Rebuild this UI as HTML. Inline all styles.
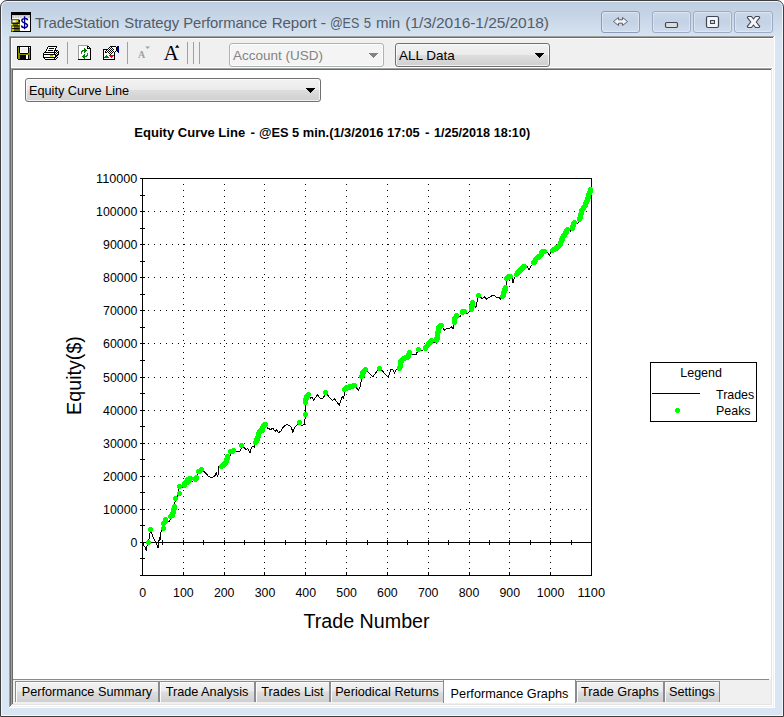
<!DOCTYPE html>
<html><head><meta charset="utf-8"><title>TradeStation Strategy Performance Report</title>
<style>
html,body{margin:0;padding:0;background:#fff;}
body{width:784px;height:717px;position:relative;overflow:hidden;font-family:"Liberation Sans",sans-serif;}
.abs{position:absolute;}
#win{position:absolute;left:0;top:0;width:782px;height:715px;border:1px solid #3e3e3e;border-radius:7px 7px 0 0;
 background:linear-gradient(to bottom,#bccde0 0px,#c6d5e6 14px,#d6e3f1 36px,#d9e5f2 40px,#d9e5f2 100%);
 box-shadow:inset 0 0 0 1px #f2f6fb;}
#title{left:35.5px;top:13px;font-size:15px;letter-spacing:-0.07px;color:#535c69;white-space:nowrap;line-height:20px;}
.cb{position:absolute;top:11px;height:20px;border:1px solid #8d9bb8;border-radius:3px;box-shadow:inset 0 0 0 1px rgba(255,255,255,.35);
 background:linear-gradient(to bottom,#c9d7e8,#c3d2e5 50%,#cfdcec);}
#client{left:9px;top:36px;width:766px;height:672px;background:#f0f0f0;}
.tab{position:absolute;top:681px;height:21px;border:1px solid #898c95;border-bottom:none;box-sizing:border-box;box-shadow:inset 1px 1px 0 #fbfbfb;
 background:linear-gradient(to bottom,#f2f2f2 0,#ebebeb 45%,#dddddd 50%,#cfcfcf 100%);font-size:12.7px;line-height:20px;color:#000;white-space:nowrap;text-align:center;}
.sep{position:absolute;top:42px;width:1px;height:22px;background:#a0a0a0;}
.dd{position:absolute;box-sizing:border-box;border:1px solid #707070;border-radius:3px;box-shadow:inset 0 0 0 1px rgba(255,255,255,.7);background:linear-gradient(to bottom,#f2f2f2 0,#ebebeb 48%,#dddddd 52%,#cfcfcf 100%);font-size:13.3px;white-space:nowrap;}
.arr{position:absolute;width:0;height:0;border-left:4px solid transparent;border-right:4px solid transparent;border-top:4px solid #000;}
</style></head><body>
<div id="win"></div>
<!-- title icon -->
<svg class="abs" style="left:11px;top:12px" width="20" height="20" viewBox="0 0 20 20">
<g style="filter:blur(0.35px)">
<rect x="0" y="0" width="20" height="20" fill="#000"/><rect x="1" y="3" width="18" height="16" fill="#fff"/><rect x="1" y="3" width="18" height="3.200" fill="#c6c6c6"/>
<rect x="3" y="4" width="1.300" height="2" fill="#e8e8e8"/><rect x="5.500" y="4" width="1.300" height="2" fill="#e8e8e8"/><rect x="8" y="4" width="1.300" height="2" fill="#e8e8e8"/><rect x="10.500" y="4" width="1.300" height="2" fill="#e8e8e8"/><rect x="13" y="4" width="1.300" height="2" fill="#e8e8e8"/><rect x="15.500" y="4" width="1.300" height="2" fill="#e8e8e8"/>
<rect x="0" y="7" width="9" height="13" rx="1.500" fill="#6c6c00"/>
<rect x="1.500" y="8.300" width="4" height="2.200" fill="#fff"/><rect x="4.500" y="8.300" width="3" height="1.700" fill="#d8d800"/>
<rect x="1" y="10.800" width="7.500" height="1" fill="#000"/><rect x="1.500" y="13.400" width="7" height="1" fill="#000"/><rect x="1.500" y="16.100" width="7" height="1" fill="#000"/><rect x="2" y="19" width="7" height="1" fill="#000"/>
<rect x="7.500" y="8" width="1.500" height="2.500" fill="#000"/>
<rect x="0" y="11.800" width="1.800" height="1.600" fill="#f0f000"/><rect x="0.800" y="14.500" width="2.200" height="1.500" fill="#e0e000"/><rect x="0.800" y="17.200" width="2.200" height="1.600" fill="#e0e000"/><rect x="7" y="12" width="1.500" height="1.200" fill="#e0e000"/>
<path d="M13.600,4.300 L13.600,17.300" stroke="#000090" stroke-width="1.200" fill="none"/>
<path d="M16.500,8.300 C16.300,6 10.700,6 10.800,8.700 C10.900,11.300 16.500,10.600 16.500,13.600 C16.500,16.300 10.600,16.300 10.600,13.500" stroke="#000090" stroke-width="1.500" fill="none"/>
</g></svg>
<svg id="title" class="abs" style="left:0;top:0" width="600" height="36" font-family="Liberation Sans, sans-serif" font-size="15px" fill="#535c69"><text x="35.0" y="28" textLength="84.4" lengthAdjust="spacingAndGlyphs">TradeStation</text><text x="124.3" y="28" textLength="54.8" lengthAdjust="spacingAndGlyphs">Strategy</text><text x="183.2" y="28" textLength="84.1" lengthAdjust="spacingAndGlyphs">Performance</text><text x="271.7" y="28" textLength="44.9" lengthAdjust="spacingAndGlyphs">Report</text><text x="320.4" y="28" textLength="5.6" lengthAdjust="spacingAndGlyphs">-</text><text x="329.9" y="28" textLength="29.3" lengthAdjust="spacingAndGlyphs">@ES</text><text x="363.8" y="28" textLength="7.3" lengthAdjust="spacingAndGlyphs">5</text><text x="376.0" y="28" textLength="24.1" lengthAdjust="spacingAndGlyphs">min</text><text x="405.3" y="28" textLength="143.6" lengthAdjust="spacingAndGlyphs">(1/3/2016-1/25/2018)</text></svg>
<div class="cb" style="left:601px;width:37px"></div>
<div class="cb" style="left:652px;width:37px;border-color:#9eabc5"></div>
<div class="cb" style="left:693px;width:37px;border-color:#9eabc5"></div>
<div class="cb" style="left:734px;width:37px;border-color:#9eabc5"></div>
<svg class="abs" style="left:601px;top:11px" width="172" height="22" viewBox="0 0 172 22">
<path d="M12.500,10.500 L17.500,6.500 L17.500,8.800 L21.500,8.800 L21.500,6.500 L26.500,10.500 L21.500,14.500 L21.500,12.200 L17.500,12.200 L17.500,14.500 Z" fill="#f4f4f4" stroke="#5a6270" stroke-width="1"/>
<rect x="64.500" y="11.500" width="12" height="5" rx="1.200" fill="#dcdcdc" stroke="#3f4656" stroke-width="1.200"/>
<rect x="105.500" y="5.500" width="12" height="11" rx="1.500" fill="#f4f4f4" stroke="#3f4656" stroke-width="1.200"/><rect x="109.500" y="9.500" width="4" height="3" fill="#c5d3e6" stroke="#3f4656" stroke-width="1"/>
<path d="M147,5.500 L150.500,5.500 L152.500,8 L154.500,5.500 L158,5.500 L158.700,6.600 L155.200,11 L158.700,15.400 L158,16.500 L154.500,16.500 L152.500,14 L150.500,16.500 L147,16.500 L146.300,15.400 L149.800,11 L146.300,6.600 Z" fill="#f6f6f6" stroke="#3f4656" stroke-width="1.100" stroke-linejoin="round"/>
</svg>
<!-- client -->
<div class="abs" style="left:9px;top:36px;width:766px;height:672px;background:#fff"></div>
<div class="abs" style="left:9px;top:36px;width:765px;height:671px;background:#a0a0a0"></div>
<div class="abs" style="left:10px;top:37px;width:764px;height:670px;background:#f0f0f0"></div>
<div class="abs" style="left:10px;top:37px;width:763px;height:669px;background:#696969"></div>
<div class="abs" style="left:11px;top:38px;width:762px;height:668px;background:#fff"></div>
<div class="abs" style="left:12px;top:39px;width:761px;height:667px;background:#f0f0f0"></div>
<!-- inner view -->
<div class="abs" style="left:11px;top:67px;width:762px;height:1px;background:#fff"></div>
<div class="abs" style="left:11px;top:68px;width:762px;height:638px;background:#fff"></div>
<div class="abs" style="left:11px;top:68px;width:761px;height:637px;background:#a0a0a0"></div>
<div class="abs" style="left:12px;top:69px;width:760px;height:636px;background:#e3e3e3"></div>
<div class="abs" style="left:12px;top:69px;width:759px;height:635px;background:#696969"></div>
<div class="abs" style="left:13px;top:70px;width:758px;height:634px;background:#f0f0f0"></div>
<div class="abs" style="left:13px;top:70px;width:758px;height:609px;background:#fff"></div>
<div class="abs" style="left:13px;top:679px;width:756px;height:1px;background:#85888f"></div>
<!-- toolbar icons -->
<svg class="abs" style="left:11px;top:38px" width="200" height="30" viewBox="11 38 200 30" shape-rendering="crispEdges">
<rect x="17" y="46" width="14" height="1" fill="#000"/><rect x="17" y="47" width="1" height="1" fill="#000"/><rect x="18" y="47" width="1" height="1" fill="#8a8a00"/><rect x="19" y="47" width="1" height="1" fill="#000"/><rect x="20" y="47" width="8" height="1" fill="#fff"/><rect x="28" y="47" width="1" height="1" fill="#000"/><rect x="29" y="47" width="1" height="1" fill="#fff"/><rect x="30" y="47" width="1" height="1" fill="#000"/><rect x="17" y="48" width="1" height="1" fill="#000"/><rect x="18" y="48" width="1" height="1" fill="#8a8a00"/><rect x="19" y="48" width="1" height="1" fill="#000"/><rect x="20" y="48" width="1" height="1" fill="#fff"/><rect x="21" y="48" width="6" height="1" fill="#efefef"/><rect x="27" y="48" width="1" height="1" fill="#fff"/><rect x="28" y="48" width="1" height="1" fill="#000"/><rect x="29" y="48" width="1" height="1" fill="#8a8a00"/><rect x="30" y="48" width="1" height="1" fill="#000"/><rect x="17" y="49" width="1" height="1" fill="#000"/><rect x="18" y="49" width="1" height="1" fill="#8a8a00"/><rect x="19" y="49" width="1" height="1" fill="#000"/><rect x="20" y="49" width="1" height="1" fill="#fff"/><rect x="21" y="49" width="6" height="1" fill="#efefef"/><rect x="27" y="49" width="1" height="1" fill="#fff"/><rect x="28" y="49" width="1" height="1" fill="#000"/><rect x="29" y="49" width="1" height="1" fill="#8a8a00"/><rect x="30" y="49" width="1" height="1" fill="#000"/><rect x="17" y="50" width="1" height="1" fill="#000"/><rect x="18" y="50" width="1" height="1" fill="#8a8a00"/><rect x="19" y="50" width="1" height="1" fill="#000"/><rect x="20" y="50" width="1" height="1" fill="#fff"/><rect x="21" y="50" width="6" height="1" fill="#efefef"/><rect x="27" y="50" width="1" height="1" fill="#fff"/><rect x="28" y="50" width="1" height="1" fill="#000"/><rect x="29" y="50" width="1" height="1" fill="#8a8a00"/><rect x="30" y="50" width="1" height="1" fill="#000"/><rect x="17" y="51" width="1" height="1" fill="#000"/><rect x="18" y="51" width="1" height="1" fill="#8a8a00"/><rect x="19" y="51" width="1" height="1" fill="#000"/><rect x="20" y="51" width="1" height="1" fill="#fff"/><rect x="21" y="51" width="6" height="1" fill="#efefef"/><rect x="27" y="51" width="1" height="1" fill="#fff"/><rect x="28" y="51" width="1" height="1" fill="#000"/><rect x="29" y="51" width="1" height="1" fill="#8a8a00"/><rect x="30" y="51" width="1" height="1" fill="#000"/><rect x="17" y="52" width="1" height="1" fill="#000"/><rect x="18" y="52" width="1" height="1" fill="#8a8a00"/><rect x="19" y="52" width="1" height="1" fill="#000"/><rect x="20" y="52" width="8" height="1" fill="#fff"/><rect x="28" y="52" width="1" height="1" fill="#000"/><rect x="29" y="52" width="1" height="1" fill="#8a8a00"/><rect x="30" y="52" width="1" height="1" fill="#000"/><rect x="17" y="53" width="1" height="1" fill="#000"/><rect x="18" y="53" width="2" height="1" fill="#8a8a00"/><rect x="20" y="53" width="8" height="1" fill="#000"/><rect x="28" y="53" width="2" height="1" fill="#8a8a00"/><rect x="30" y="53" width="1" height="1" fill="#000"/><rect x="17" y="54" width="1" height="1" fill="#000"/><rect x="18" y="54" width="12" height="1" fill="#8a8a00"/><rect x="30" y="54" width="1" height="1" fill="#000"/><rect x="17" y="55" width="1" height="1" fill="#000"/><rect x="18" y="55" width="2" height="1" fill="#8a8a00"/><rect x="20" y="55" width="6" height="1" fill="#000"/><rect x="26" y="55" width="2" height="1" fill="#fff"/><rect x="28" y="55" width="1" height="1" fill="#000"/><rect x="29" y="55" width="1" height="1" fill="#8a8a00"/><rect x="30" y="55" width="1" height="1" fill="#000"/><rect x="17" y="56" width="1" height="1" fill="#000"/><rect x="18" y="56" width="2" height="1" fill="#8a8a00"/><rect x="20" y="56" width="6" height="1" fill="#000"/><rect x="26" y="56" width="2" height="1" fill="#fff"/><rect x="28" y="56" width="1" height="1" fill="#000"/><rect x="29" y="56" width="1" height="1" fill="#8a8a00"/><rect x="30" y="56" width="1" height="1" fill="#000"/><rect x="17" y="57" width="1" height="1" fill="#000"/><rect x="18" y="57" width="2" height="1" fill="#8a8a00"/><rect x="20" y="57" width="6" height="1" fill="#000"/><rect x="26" y="57" width="2" height="1" fill="#fff"/><rect x="28" y="57" width="1" height="1" fill="#000"/><rect x="29" y="57" width="1" height="1" fill="#8a8a00"/><rect x="30" y="57" width="1" height="1" fill="#000"/><rect x="17" y="58" width="1" height="1" fill="#000"/><rect x="18" y="58" width="2" height="1" fill="#8a8a00"/><rect x="20" y="58" width="6" height="1" fill="#000"/><rect x="26" y="58" width="2" height="1" fill="#fff"/><rect x="28" y="58" width="1" height="1" fill="#000"/><rect x="29" y="58" width="1" height="1" fill="#8a8a00"/><rect x="30" y="58" width="1" height="1" fill="#000"/><rect x="18" y="59" width="13" height="1" fill="#000"/><rect x="48" y="46" width="9" height="1" fill="#000"/><rect x="47" y="47" width="1" height="1" fill="#000"/><rect x="48" y="47" width="8" height="1" fill="#fff"/><rect x="56" y="47" width="1" height="1" fill="#000"/><rect x="47" y="48" width="1" height="1" fill="#000"/><rect x="48" y="48" width="1" height="1" fill="#fff"/><rect x="49" y="48" width="5" height="1" fill="#000"/><rect x="54" y="48" width="1" height="1" fill="#fff"/><rect x="55" y="48" width="1" height="1" fill="#000"/><rect x="46" y="49" width="1" height="1" fill="#000"/><rect x="47" y="49" width="8" height="1" fill="#fff"/><rect x="55" y="49" width="1" height="1" fill="#000"/><rect x="46" y="50" width="1" height="1" fill="#000"/><rect x="47" y="50" width="1" height="1" fill="#fff"/><rect x="48" y="50" width="5" height="1" fill="#000"/><rect x="53" y="50" width="1" height="1" fill="#fff"/><rect x="54" y="50" width="4" height="1" fill="#000"/><rect x="45" y="51" width="1" height="1" fill="#000"/><rect x="46" y="51" width="8" height="1" fill="#fff"/><rect x="54" y="51" width="1" height="1" fill="#000"/><rect x="55" y="51" width="1" height="1" fill="#fff"/><rect x="56" y="51" width="1" height="1" fill="#000"/><rect x="57" y="51" width="1" height="1" fill="#fff"/><rect x="58" y="51" width="1" height="1" fill="#000"/><rect x="44" y="52" width="12" height="1" fill="#000"/><rect x="56" y="52" width="1" height="1" fill="#fff"/><rect x="57" y="52" width="2" height="1" fill="#000"/><rect x="43" y="53" width="1" height="1" fill="#000"/><rect x="44" y="53" width="10" height="1" fill="#fff"/><rect x="54" y="53" width="1" height="1" fill="#000"/><rect x="55" y="53" width="1" height="1" fill="#fff"/><rect x="56" y="53" width="1" height="1" fill="#000"/><rect x="57" y="53" width="1" height="1" fill="#fff"/><rect x="58" y="53" width="1" height="1" fill="#000"/><rect x="43" y="54" width="13" height="1" fill="#000"/><rect x="56" y="54" width="1" height="1" fill="#fff"/><rect x="57" y="54" width="2" height="1" fill="#000"/><rect x="43" y="55" width="1" height="1" fill="#000"/><rect x="44" y="55" width="6" height="1" fill="#fff"/><rect x="50" y="55" width="3" height="1" fill="#8090a0"/><rect x="53" y="55" width="2" height="1" fill="#fff"/><rect x="55" y="55" width="3" height="1" fill="#000"/><rect x="43" y="56" width="1" height="1" fill="#000"/><rect x="44" y="56" width="6" height="1" fill="#fff"/><rect x="50" y="56" width="3" height="1" fill="#e8e800"/><rect x="53" y="56" width="2" height="1" fill="#fff"/><rect x="55" y="56" width="2" height="1" fill="#000"/><rect x="43" y="57" width="13" height="1" fill="#000"/><rect x="56" y="57" width="1" height="1" fill="#fff"/><rect x="57" y="57" width="1" height="1" fill="#000"/><rect x="44" y="58" width="1" height="1" fill="#000"/><rect x="45" y="58" width="9" height="1" fill="#fff"/><rect x="54" y="58" width="1" height="1" fill="#000"/><rect x="55" y="58" width="1" height="1" fill="#fff"/><rect x="56" y="58" width="1" height="1" fill="#000"/><rect x="45" y="59" width="11" height="1" fill="#000"/><rect x="78" y="45" width="10" height="1" fill="#a0a0a0"/><rect x="78" y="46" width="1" height="1" fill="#a0a0a0"/><rect x="79" y="46" width="8" height="1" fill="#fff"/><rect x="87" y="46" width="2" height="1" fill="#000"/><rect x="78" y="47" width="1" height="1" fill="#a0a0a0"/><rect x="79" y="47" width="8" height="1" fill="#fff"/><rect x="87" y="47" width="1" height="1" fill="#000"/><rect x="88" y="47" width="1" height="1" fill="#fff"/><rect x="89" y="47" width="1" height="1" fill="#000"/><rect x="78" y="48" width="1" height="1" fill="#a0a0a0"/><rect x="79" y="48" width="5" height="1" fill="#fff"/><rect x="84" y="48" width="1" height="1" fill="#008000"/><rect x="85" y="48" width="2" height="1" fill="#fff"/><rect x="87" y="48" width="4" height="1" fill="#000"/><rect x="78" y="49" width="1" height="1" fill="#a0a0a0"/><rect x="79" y="49" width="5" height="1" fill="#fff"/><rect x="84" y="49" width="2" height="1" fill="#008000"/><rect x="86" y="49" width="4" height="1" fill="#fff"/><rect x="90" y="49" width="1" height="1" fill="#000"/><rect x="78" y="50" width="1" height="1" fill="#a0a0a0"/><rect x="79" y="50" width="3" height="1" fill="#fff"/><rect x="82" y="50" width="5" height="1" fill="#008000"/><rect x="87" y="50" width="3" height="1" fill="#fff"/><rect x="90" y="50" width="1" height="1" fill="#000"/><rect x="78" y="51" width="1" height="1" fill="#a0a0a0"/><rect x="79" y="51" width="2" height="1" fill="#fff"/><rect x="81" y="51" width="2" height="1" fill="#008090"/><rect x="83" y="51" width="1" height="1" fill="#fff"/><rect x="84" y="51" width="2" height="1" fill="#008000"/><rect x="86" y="51" width="4" height="1" fill="#fff"/><rect x="90" y="51" width="1" height="1" fill="#000"/><rect x="78" y="52" width="1" height="1" fill="#a0a0a0"/><rect x="79" y="52" width="2" height="1" fill="#fff"/><rect x="81" y="52" width="1" height="1" fill="#008090"/><rect x="82" y="52" width="2" height="1" fill="#fff"/><rect x="84" y="52" width="1" height="1" fill="#008000"/><rect x="85" y="52" width="5" height="1" fill="#fff"/><rect x="90" y="52" width="1" height="1" fill="#000"/><rect x="78" y="53" width="1" height="1" fill="#a0a0a0"/><rect x="79" y="53" width="2" height="1" fill="#fff"/><rect x="81" y="53" width="1" height="1" fill="#008090"/><rect x="82" y="53" width="5" height="1" fill="#fff"/><rect x="87" y="53" width="1" height="1" fill="#008090"/><rect x="88" y="53" width="2" height="1" fill="#fff"/><rect x="90" y="53" width="1" height="1" fill="#000"/><rect x="78" y="54" width="1" height="1" fill="#a0a0a0"/><rect x="79" y="54" width="5" height="1" fill="#fff"/><rect x="84" y="54" width="1" height="1" fill="#008000"/><rect x="85" y="54" width="2" height="1" fill="#fff"/><rect x="87" y="54" width="1" height="1" fill="#008090"/><rect x="88" y="54" width="2" height="1" fill="#fff"/><rect x="90" y="54" width="1" height="1" fill="#000"/><rect x="78" y="55" width="1" height="1" fill="#a0a0a0"/><rect x="79" y="55" width="4" height="1" fill="#fff"/><rect x="83" y="55" width="2" height="1" fill="#008000"/><rect x="85" y="55" width="1" height="1" fill="#fff"/><rect x="86" y="55" width="2" height="1" fill="#008090"/><rect x="88" y="55" width="2" height="1" fill="#fff"/><rect x="90" y="55" width="1" height="1" fill="#000"/><rect x="78" y="56" width="1" height="1" fill="#a0a0a0"/><rect x="79" y="56" width="3" height="1" fill="#fff"/><rect x="82" y="56" width="5" height="1" fill="#008000"/><rect x="87" y="56" width="3" height="1" fill="#fff"/><rect x="90" y="56" width="1" height="1" fill="#000"/><rect x="78" y="57" width="1" height="1" fill="#a0a0a0"/><rect x="79" y="57" width="4" height="1" fill="#fff"/><rect x="83" y="57" width="2" height="1" fill="#008000"/><rect x="85" y="57" width="5" height="1" fill="#fff"/><rect x="90" y="57" width="1" height="1" fill="#000"/><rect x="78" y="58" width="1" height="1" fill="#a0a0a0"/><rect x="79" y="58" width="5" height="1" fill="#fff"/><rect x="84" y="58" width="1" height="1" fill="#008000"/><rect x="85" y="58" width="5" height="1" fill="#fff"/><rect x="90" y="58" width="1" height="1" fill="#000"/><rect x="78" y="59" width="13" height="1" fill="#000"/><rect x="110" y="46" width="6" height="1" fill="#000"/><rect x="117" y="46" width="2" height="1" fill="#000090"/><rect x="109" y="47" width="1" height="1" fill="#000"/><rect x="110" y="47" width="1" height="1" fill="#fff"/><rect x="111" y="47" width="1" height="1" fill="#000"/><rect x="112" y="47" width="4" height="1" fill="#fff"/><rect x="116" y="47" width="1" height="1" fill="#000"/><rect x="117" y="47" width="2" height="1" fill="#000090"/><rect x="108" y="48" width="1" height="1" fill="#000"/><rect x="109" y="48" width="1" height="1" fill="#fff"/><rect x="110" y="48" width="1" height="1" fill="#000"/><rect x="111" y="48" width="1" height="1" fill="#fff"/><rect x="112" y="48" width="1" height="1" fill="#000"/><rect x="113" y="48" width="3" height="1" fill="#fff"/><rect x="116" y="48" width="1" height="1" fill="#000"/><rect x="117" y="48" width="2" height="1" fill="#000090"/><rect x="103" y="49" width="5" height="1" fill="#000"/><rect x="108" y="49" width="1" height="1" fill="#fff"/><rect x="109" y="49" width="1" height="1" fill="#000"/><rect x="110" y="49" width="1" height="1" fill="#fff"/><rect x="111" y="49" width="1" height="1" fill="#000"/><rect x="112" y="49" width="1" height="1" fill="#fff"/><rect x="113" y="49" width="1" height="1" fill="#000"/><rect x="114" y="49" width="2" height="1" fill="#fff"/><rect x="116" y="49" width="1" height="1" fill="#000"/><rect x="117" y="49" width="2" height="1" fill="#000090"/><rect x="103" y="50" width="1" height="1" fill="#000"/><rect x="104" y="50" width="2" height="1" fill="#fff"/><rect x="106" y="50" width="1" height="1" fill="#000"/><rect x="107" y="50" width="1" height="1" fill="#fff"/><rect x="108" y="50" width="1" height="1" fill="#000"/><rect x="109" y="50" width="1" height="1" fill="#fff"/><rect x="110" y="50" width="1" height="1" fill="#000"/><rect x="111" y="50" width="1" height="1" fill="#fff"/><rect x="112" y="50" width="1" height="1" fill="#000"/><rect x="113" y="50" width="3" height="1" fill="#fff"/><rect x="116" y="50" width="1" height="1" fill="#000"/><rect x="117" y="50" width="2" height="1" fill="#000090"/><rect x="103" y="51" width="1" height="1" fill="#000"/><rect x="104" y="51" width="1" height="1" fill="#fff"/><rect x="105" y="51" width="1" height="1" fill="#000"/><rect x="106" y="51" width="1" height="1" fill="#fff"/><rect x="107" y="51" width="1" height="1" fill="#000"/><rect x="108" y="51" width="1" height="1" fill="#fff"/><rect x="109" y="51" width="1" height="1" fill="#000"/><rect x="110" y="51" width="1" height="1" fill="#fff"/><rect x="111" y="51" width="1" height="1" fill="#000"/><rect x="112" y="51" width="1" height="1" fill="#fff"/><rect x="113" y="51" width="1" height="1" fill="#000"/><rect x="114" y="51" width="1" height="1" fill="#fff"/><rect x="115" y="51" width="1" height="1" fill="#000"/><rect x="117" y="51" width="2" height="1" fill="#000090"/><rect x="103" y="52" width="1" height="1" fill="#000"/><rect x="104" y="52" width="1" height="1" fill="#fff"/><rect x="105" y="52" width="2" height="1" fill="#000"/><rect x="107" y="52" width="1" height="1" fill="#fff"/><rect x="108" y="52" width="1" height="1" fill="#000"/><rect x="109" y="52" width="1" height="1" fill="#fff"/><rect x="110" y="52" width="1" height="1" fill="#000"/><rect x="111" y="52" width="1" height="1" fill="#fff"/><rect x="112" y="52" width="1" height="1" fill="#000"/><rect x="113" y="52" width="1" height="1" fill="#fff"/><rect x="114" y="52" width="1" height="1" fill="#000"/><rect x="118" y="52" width="1" height="1" fill="#000090"/><rect x="103" y="53" width="1" height="1" fill="#000"/><rect x="104" y="53" width="5" height="1" fill="#fff"/><rect x="109" y="53" width="1" height="1" fill="#000"/><rect x="110" y="53" width="1" height="1" fill="#fff"/><rect x="111" y="53" width="1" height="1" fill="#000"/><rect x="112" y="53" width="2" height="1" fill="#fff"/><rect x="114" y="53" width="1" height="1" fill="#000"/><rect x="103" y="54" width="1" height="1" fill="#000"/><rect x="104" y="54" width="6" height="1" fill="#fff"/><rect x="110" y="54" width="1" height="1" fill="#000"/><rect x="111" y="54" width="3" height="1" fill="#fff"/><rect x="114" y="54" width="1" height="1" fill="#000"/><rect x="103" y="55" width="1" height="1" fill="#000"/><rect x="104" y="55" width="2" height="1" fill="#fff"/><rect x="106" y="55" width="1" height="1" fill="#008000"/><rect x="107" y="55" width="2" height="1" fill="#fff"/><rect x="109" y="55" width="5" height="1" fill="#ff0000"/><rect x="114" y="55" width="1" height="1" fill="#000"/><rect x="103" y="56" width="1" height="1" fill="#000"/><rect x="104" y="56" width="1" height="1" fill="#fff"/><rect x="105" y="56" width="3" height="1" fill="#008000"/><rect x="108" y="56" width="2" height="1" fill="#fff"/><rect x="110" y="56" width="3" height="1" fill="#ff0000"/><rect x="113" y="56" width="1" height="1" fill="#fff"/><rect x="114" y="56" width="1" height="1" fill="#000"/><rect x="103" y="57" width="1" height="1" fill="#000"/><rect x="104" y="57" width="5" height="1" fill="#008000"/><rect x="109" y="57" width="2" height="1" fill="#fff"/><rect x="111" y="57" width="1" height="1" fill="#ff0000"/><rect x="112" y="57" width="2" height="1" fill="#fff"/><rect x="114" y="57" width="1" height="1" fill="#000"/><rect x="103" y="58" width="1" height="1" fill="#000"/><rect x="104" y="58" width="10" height="1" fill="#fff"/><rect x="114" y="58" width="1" height="1" fill="#000"/><rect x="103" y="59" width="12" height="1" fill="#000"/><rect x="67" y="42" width="1" height="22" fill="#a0a0a0"/>
<rect x="127" y="42" width="1" height="22" fill="#a0a0a0"/>
<g shape-rendering="auto"><text x="141.700" y="58" font-family="Liberation Serif" font-size="10px" font-weight="bold" fill="#a0a0a0" text-anchor="middle">A</text><path d="M145.300,46.500 L150,46.500 L147.650,49 Z" fill="#a0a0a0"/>
<text x="171" y="59.500" font-family="Liberation Serif" font-size="21px" fill="#000" text-anchor="middle">A</text><path d="M175,47.700 L179.400,47.700 L177.200,44.700 Z" fill="#000"/></g>
<rect x="187" y="42" width="1" height="22" fill="#a0a0a0"/><rect x="193" y="42" width="1" height="22" fill="#a0a0a0"/><rect x="199" y="42" width="1" height="22" fill="#a0a0a0"/>
</svg>
<!-- dropdowns -->
<div class="dd" style="left:229px;top:43px;width:155px;height:24px;background:#f4f4f4;border-color:#adb2b5;color:#838383;font-size:13.5px;line-height:24px;padding-left:3px;">Account (USD)<svg style="position:absolute;left:139px;top:9px" width="9" height="5" shape-rendering="crispEdges" fill="#838383"><rect x="0" y="0" width="9" height="1"/><rect x="1" y="1" width="7" height="1"/><rect x="2" y="2" width="5" height="1"/><rect x="3" y="3" width="3" height="1"/><rect x="4" y="4" width="1" height="1"/></svg></div>
<div class="dd" style="left:395px;top:43px;width:155px;height:24px;font-size:13.5px;line-height:24px;padding-left:3px;">ALL Data<svg style="position:absolute;left:139px;top:9px" width="9" height="5" shape-rendering="crispEdges" fill="#000"><rect x="0" y="0" width="9" height="1"/><rect x="1" y="1" width="7" height="1"/><rect x="2" y="2" width="5" height="1"/><rect x="3" y="3" width="3" height="1"/><rect x="4" y="4" width="1" height="1"/></svg></div>
<div class="dd" style="left:25px;top:78px;width:296px;height:24px;font-size:12.7px;line-height:25px;padding-left:3px;">Equity Curve Line<svg style="position:absolute;left:280px;top:9px" width="9" height="5" shape-rendering="crispEdges" fill="#000"><rect x="0" y="0" width="9" height="1"/><rect x="1" y="1" width="7" height="1"/><rect x="2" y="2" width="5" height="1"/><rect x="3" y="3" width="3" height="1"/><rect x="4" y="4" width="1" height="1"/></svg></div>
<svg id="chart" width="784" height="717" viewBox="0 0 784 717" style="position:absolute;left:0;top:0" font-family="Liberation Sans, sans-serif">
<g shape-rendering="crispEdges" stroke="#000" stroke-width="1" stroke-dasharray="1 5" fill="none"><line x1="148" y1="211.5" x2="591" y2="211.5"/><line x1="148" y1="244.5" x2="591" y2="244.5"/><line x1="148" y1="277.5" x2="591" y2="277.5"/><line x1="148" y1="310.5" x2="591" y2="310.5"/><line x1="148" y1="343.5" x2="591" y2="343.5"/><line x1="148" y1="377.5" x2="591" y2="377.5"/><line x1="148" y1="410.5" x2="591" y2="410.5"/><line x1="148" y1="443.5" x2="591" y2="443.5"/><line x1="148" y1="476.5" x2="591" y2="476.5"/><line x1="148" y1="509.5" x2="591" y2="509.5"/><line x1="183.5" y1="184" x2="183.5" y2="575"/><line x1="224.5" y1="184" x2="224.5" y2="575"/><line x1="264.5" y1="184" x2="264.5" y2="575"/><line x1="305.5" y1="184" x2="305.5" y2="575"/><line x1="346.5" y1="184" x2="346.5" y2="575"/><line x1="387.5" y1="184" x2="387.5" y2="575"/><line x1="428.5" y1="184" x2="428.5" y2="575"/><line x1="469.5" y1="184" x2="469.5" y2="575"/><line x1="509.5" y1="184" x2="509.5" y2="575"/><line x1="550.5" y1="184" x2="550.5" y2="575"/></g>
<g shape-rendering="crispEdges" fill="#000">
<rect x="142" y="178" width="450" height="1"/>
<rect x="142" y="178" width="1" height="398"/>
<rect x="591" y="178" width="1" height="398"/>
<rect x="140" y="575" width="452" height="1"/>
<rect x="140" y="542" width="452" height="1"/>
<rect x="140" y="178" width="5" height="1"/><rect x="140" y="195" width="5" height="1"/><rect x="140" y="211" width="5" height="1"/><rect x="140" y="228" width="5" height="1"/><rect x="140" y="244" width="5" height="1"/><rect x="140" y="261" width="5" height="1"/><rect x="140" y="277" width="5" height="1"/><rect x="140" y="294" width="5" height="1"/><rect x="140" y="310" width="5" height="1"/><rect x="140" y="327" width="5" height="1"/><rect x="140" y="343" width="5" height="1"/><rect x="140" y="360" width="5" height="1"/><rect x="140" y="377" width="5" height="1"/><rect x="140" y="393" width="5" height="1"/><rect x="140" y="410" width="5" height="1"/><rect x="140" y="426" width="5" height="1"/><rect x="140" y="443" width="5" height="1"/><rect x="140" y="459" width="5" height="1"/><rect x="140" y="476" width="5" height="1"/><rect x="140" y="492" width="5" height="1"/><rect x="140" y="509" width="5" height="1"/><rect x="140" y="525" width="5" height="1"/><rect x="140" y="542" width="5" height="1"/><rect x="140" y="558" width="5" height="1"/><rect x="162" y="540" width="1" height="5"/><rect x="183" y="540" width="1" height="5"/><rect x="203" y="540" width="1" height="5"/><rect x="224" y="540" width="1" height="5"/><rect x="244" y="540" width="1" height="5"/><rect x="264" y="540" width="1" height="5"/><rect x="285" y="540" width="1" height="5"/><rect x="305" y="540" width="1" height="5"/><rect x="326" y="540" width="1" height="5"/><rect x="346" y="540" width="1" height="5"/><rect x="367" y="540" width="1" height="5"/><rect x="387" y="540" width="1" height="5"/><rect x="407" y="540" width="1" height="5"/><rect x="428" y="540" width="1" height="5"/><rect x="448" y="540" width="1" height="5"/><rect x="469" y="540" width="1" height="5"/><rect x="489" y="540" width="1" height="5"/><rect x="509" y="540" width="1" height="5"/><rect x="530" y="540" width="1" height="5"/><rect x="550" y="540" width="1" height="5"/><rect x="571" y="540" width="1" height="5"/><rect x="183" y="572" width="1" height="3"/><rect x="224" y="572" width="1" height="3"/><rect x="264" y="572" width="1" height="3"/><rect x="305" y="572" width="1" height="3"/><rect x="346" y="572" width="1" height="3"/><rect x="387" y="572" width="1" height="3"/><rect x="428" y="572" width="1" height="3"/><rect x="469" y="572" width="1" height="3"/><rect x="509" y="572" width="1" height="3"/><rect x="550" y="572" width="1" height="3"/>
</g>
<polyline points="142.9,542.4 144.1,546.4 145.2,547.0 146.1,550.5 147.2,545.1 148.4,542.5 149.5,535.9 150.6,529.3 153.3,537.5 156.4,543.6 158.3,548.2 159.2,537.5 159.9,540.5 161.0,532.1 163.3,528.6 163.8,523.7 165.9,519.8 167.9,522.1 169.5,521.4 171.0,516.7 172.5,514.4 173.6,510.6 174.5,506.8 175.4,498.8 179.1,493.7 178.2,488.4 179.4,486.5 182.5,487.6 184.0,485.3 185.9,482.5 187.1,483.0 187.9,479.2 190.2,478.8 189.1,481.0 192.5,481.5 194.0,479.9 195.4,479.2 196.9,477.6 198.6,471.5 201.7,469.6 205.5,473.0 208.6,476.4 211.7,477.6 214.7,476.1 216.3,473.0 217.8,477.3 218.9,466.1 221.6,466.1 223.9,465.3 226.2,461.5 227.8,456.9 230.1,455.8 230.8,451.5 233.9,450.8 236.2,451.8 239.6,451.4 241.5,448.3 241.2,446.0 243.8,447.5 246.1,449.8 247.6,448.3 249.9,452.9 251.5,447.5 253.0,446.0 254.5,447.5 255.6,442.9 256.8,439.8 258.4,436.8 259.1,431.4 262.2,430.3 263.7,425.3 265.6,424.5 267.6,428.3 270.6,429.4 272.9,428.3 275.2,431.4 276.8,429.9 278.3,432.9 280.6,431.4 282.9,427.6 285.2,425.3 287.5,424.5 289.8,426.0 291.4,427.6 292.9,432.2 294.4,427.6 296.7,425.3 299.3,422.2 301.3,425.3 304.4,424.8 305.5,414.5 305.5,402.7 306.2,397.6 308.2,394.6 310.5,398.4 312.1,396.9 313.6,399.9 315.9,396.9 317.4,394.6 319.7,397.6 322.0,399.2 324.3,396.1 325.4,392.4 328.4,396.0 332.3,400.6 334.6,399.0 339.2,405.2 342.2,396.7 343.8,398.3 344.6,389.1 347.6,387.5 350.7,386.7 354.5,385.7 358.4,389.8 360.7,386.0 361.4,376.8 363.0,372.9 365.3,369.4 369.1,372.9 372.9,376.8 375.2,373.7 377.5,370.6 379.4,368.6 382.9,371.4 385.2,374.5 388.3,377.1 390.6,369.9 392.9,369.9 394.4,372.9 396.7,369.1 399.8,368.3 400.6,363.7 401.3,360.2 405.2,357.6 408.2,356.8 409.3,352.5 412.8,354.5 415.9,355.0 418.2,349.9 422.0,350.7 425.1,348.4 428.2,344.6 431.2,340.7 434.3,343.0 436.6,340.7 437.4,335.3 438.2,331.5 438.9,327.7 439.6,326.7 441.5,325.2 444.6,330.5 446.9,328.2 449.2,329.0 451.5,326.7 453.0,329.0 454.1,322.9 454.5,318.3 456.5,316.0 460.7,316.0 462.2,312.1 464.5,311.4 467.6,313.7 469.1,312.1 471.4,309.1 472.2,305.2 472.6,302.9 476.0,307.5 477.5,299.1 478.3,295.5 480.6,296.8 482.1,299.1 484.4,296.8 486.7,299.1 489.1,297.5 491.4,296.0 494.4,295.2 496.7,297.5 499.0,297.5 500.6,299.1 502.9,296.0 504.1,291.4 505.9,287.6 506.7,284.5 506.7,278.4 510.5,276.1 512.1,278.4 513.1,283.0 514.4,277.6 516.7,274.5 520.5,269.9 524.3,266.4 527.4,266.9 528.9,269.9 530.5,266.9 533.8,262.8 536.8,258.2 540.2,255.9 542.2,252.1 544.5,251.0 547.6,252.1 549.4,255.2 552.2,250.6 556.0,248.3 559.8,245.2 561.4,240.6 562.9,237.5 565.2,233.7 567.2,229.5 570.3,231.4 572.1,228.3 574.1,222.9 577.5,223.7 579.8,219.9 580.6,216.0 581.3,213.0 582.1,209.9 583.6,207.6 585.2,205.3 586.2,202.5 587.5,199.9 588.2,197.3 589.0,194.6 589.8,192.2 590.5,189.9" fill="none" stroke="#000" stroke-width="1" shape-rendering="crispEdges"/>
<g fill="#00ff00" shape-rendering="crispEdges"><circle cx="148.5" cy="542.5" r="2.5"/><circle cx="150.5" cy="529.5" r="2.5"/><circle cx="163.5" cy="528.5" r="2.5"/><circle cx="163.5" cy="523.5" r="2.5"/><circle cx="164.5" cy="522.5" r="2.5"/><circle cx="165.5" cy="521.5" r="2.5"/><circle cx="165.5" cy="520.5" r="2.5"/><circle cx="165.5" cy="519.5" r="2.5"/><circle cx="170.5" cy="516.5" r="2.5"/><circle cx="171.5" cy="515.5" r="2.5"/><circle cx="172.5" cy="515.5" r="2.5"/><circle cx="172.5" cy="514.5" r="2.5"/><circle cx="172.5" cy="513.5" r="2.5"/><circle cx="173.5" cy="512.5" r="2.5"/><circle cx="173.5" cy="511.5" r="2.5"/><circle cx="173.5" cy="510.5" r="2.5"/><circle cx="173.5" cy="509.5" r="2.5"/><circle cx="174.5" cy="508.5" r="2.5"/><circle cx="174.5" cy="507.5" r="2.5"/><circle cx="174.5" cy="506.5" r="2.5"/><circle cx="175.5" cy="498.5" r="2.5"/><circle cx="179.5" cy="493.5" r="2.5"/><circle cx="179.5" cy="486.5" r="2.5"/><circle cx="184.5" cy="485.5" r="2.5"/><circle cx="184.5" cy="484.5" r="2.5"/><circle cx="184.5" cy="483.5" r="2.5"/><circle cx="185.5" cy="483.5" r="2.5"/><circle cx="185.5" cy="482.5" r="2.5"/><circle cx="186.5" cy="482.5" r="2.5"/><circle cx="187.5" cy="482.5" r="2.5"/><circle cx="187.5" cy="481.5" r="2.5"/><circle cx="187.5" cy="480.5" r="2.5"/><circle cx="187.5" cy="479.5" r="2.5"/><circle cx="188.5" cy="479.5" r="2.5"/><circle cx="189.5" cy="478.5" r="2.5"/><circle cx="190.5" cy="478.5" r="2.5"/><circle cx="189.5" cy="479.5" r="2.5"/><circle cx="189.5" cy="480.5" r="2.5"/><circle cx="195.5" cy="479.5" r="2.5"/><circle cx="195.5" cy="478.5" r="2.5"/><circle cx="196.5" cy="478.5" r="2.5"/><circle cx="196.5" cy="477.5" r="2.5"/><circle cx="198.5" cy="471.5" r="2.5"/><circle cx="199.5" cy="471.5" r="2.5"/><circle cx="200.5" cy="470.5" r="2.5"/><circle cx="201.5" cy="469.5" r="2.5"/><circle cx="221.5" cy="466.5" r="2.5"/><circle cx="222.5" cy="465.5" r="2.5"/><circle cx="223.5" cy="465.5" r="2.5"/><circle cx="224.5" cy="464.5" r="2.5"/><circle cx="224.5" cy="463.5" r="2.5"/><circle cx="225.5" cy="463.5" r="2.5"/><circle cx="225.5" cy="462.5" r="2.5"/><circle cx="226.5" cy="461.5" r="2.5"/><circle cx="226.5" cy="460.5" r="2.5"/><circle cx="226.5" cy="459.5" r="2.5"/><circle cx="227.5" cy="458.5" r="2.5"/><circle cx="227.5" cy="457.5" r="2.5"/><circle cx="227.5" cy="456.5" r="2.5"/><circle cx="230.5" cy="451.5" r="2.5"/><circle cx="231.5" cy="451.5" r="2.5"/><circle cx="232.5" cy="451.5" r="2.5"/><circle cx="233.5" cy="450.5" r="2.5"/><circle cx="241.5" cy="445.5" r="2.5"/><circle cx="255.5" cy="442.5" r="2.5"/><circle cx="256.5" cy="441.5" r="2.5"/><circle cx="256.5" cy="440.5" r="2.5"/><circle cx="256.5" cy="439.5" r="2.5"/><circle cx="257.5" cy="439.5" r="2.5"/><circle cx="257.5" cy="438.5" r="2.5"/><circle cx="257.5" cy="437.5" r="2.5"/><circle cx="258.5" cy="436.5" r="2.5"/><circle cx="258.5" cy="435.5" r="2.5"/><circle cx="258.5" cy="434.5" r="2.5"/><circle cx="258.5" cy="433.5" r="2.5"/><circle cx="259.5" cy="432.5" r="2.5"/><circle cx="259.5" cy="431.5" r="2.5"/><circle cx="260.5" cy="430.5" r="2.5"/><circle cx="261.5" cy="430.5" r="2.5"/><circle cx="262.5" cy="430.5" r="2.5"/><circle cx="262.5" cy="429.5" r="2.5"/><circle cx="262.5" cy="428.5" r="2.5"/><circle cx="262.5" cy="427.5" r="2.5"/><circle cx="263.5" cy="426.5" r="2.5"/><circle cx="263.5" cy="425.5" r="2.5"/><circle cx="264.5" cy="424.5" r="2.5"/><circle cx="265.5" cy="424.5" r="2.5"/><circle cx="299.5" cy="422.5" r="2.5"/><circle cx="305.5" cy="414.5" r="2.5"/><circle cx="305.5" cy="402.5" r="2.5"/><circle cx="305.5" cy="401.5" r="2.5"/><circle cx="305.5" cy="400.5" r="2.5"/><circle cx="305.5" cy="399.5" r="2.5"/><circle cx="306.5" cy="398.5" r="2.5"/><circle cx="306.5" cy="397.5" r="2.5"/><circle cx="306.5" cy="396.5" r="2.5"/><circle cx="307.5" cy="396.5" r="2.5"/><circle cx="307.5" cy="395.5" r="2.5"/><circle cx="308.5" cy="394.5" r="2.5"/><circle cx="325.5" cy="392.5" r="2.5"/><circle cx="344.5" cy="389.5" r="2.5"/><circle cx="345.5" cy="388.5" r="2.5"/><circle cx="346.5" cy="388.5" r="2.5"/><circle cx="346.5" cy="387.5" r="2.5"/><circle cx="347.5" cy="387.5" r="2.5"/><circle cx="348.5" cy="387.5" r="2.5"/><circle cx="349.5" cy="387.5" r="2.5"/><circle cx="349.5" cy="386.5" r="2.5"/><circle cx="350.5" cy="386.5" r="2.5"/><circle cx="351.5" cy="386.5" r="2.5"/><circle cx="352.5" cy="386.5" r="2.5"/><circle cx="353.5" cy="385.5" r="2.5"/><circle cx="354.5" cy="385.5" r="2.5"/><circle cx="361.5" cy="376.5" r="2.5"/><circle cx="362.5" cy="375.5" r="2.5"/><circle cx="362.5" cy="374.5" r="2.5"/><circle cx="362.5" cy="373.5" r="2.5"/><circle cx="362.5" cy="372.5" r="2.5"/><circle cx="363.5" cy="372.5" r="2.5"/><circle cx="363.5" cy="371.5" r="2.5"/><circle cx="364.5" cy="370.5" r="2.5"/><circle cx="365.5" cy="369.5" r="2.5"/><circle cx="379.5" cy="368.5" r="2.5"/><circle cx="399.5" cy="368.5" r="2.5"/><circle cx="399.5" cy="367.5" r="2.5"/><circle cx="400.5" cy="366.5" r="2.5"/><circle cx="400.5" cy="365.5" r="2.5"/><circle cx="400.5" cy="364.5" r="2.5"/><circle cx="400.5" cy="363.5" r="2.5"/><circle cx="400.5" cy="362.5" r="2.5"/><circle cx="400.5" cy="361.5" r="2.5"/><circle cx="401.5" cy="361.5" r="2.5"/><circle cx="401.5" cy="360.5" r="2.5"/><circle cx="402.5" cy="359.5" r="2.5"/><circle cx="403.5" cy="358.5" r="2.5"/><circle cx="404.5" cy="358.5" r="2.5"/><circle cx="405.5" cy="357.5" r="2.5"/><circle cx="406.5" cy="357.5" r="2.5"/><circle cx="407.5" cy="357.5" r="2.5"/><circle cx="408.5" cy="356.5" r="2.5"/><circle cx="408.5" cy="355.5" r="2.5"/><circle cx="408.5" cy="354.5" r="2.5"/><circle cx="409.5" cy="353.5" r="2.5"/><circle cx="409.5" cy="352.5" r="2.5"/><circle cx="418.5" cy="349.5" r="2.5"/><circle cx="425.5" cy="348.5" r="2.5"/><circle cx="425.5" cy="347.5" r="2.5"/><circle cx="426.5" cy="346.5" r="2.5"/><circle cx="427.5" cy="345.5" r="2.5"/><circle cx="428.5" cy="344.5" r="2.5"/><circle cx="428.5" cy="343.5" r="2.5"/><circle cx="429.5" cy="343.5" r="2.5"/><circle cx="430.5" cy="342.5" r="2.5"/><circle cx="430.5" cy="341.5" r="2.5"/><circle cx="431.5" cy="340.5" r="2.5"/><circle cx="436.5" cy="340.5" r="2.5"/><circle cx="436.5" cy="339.5" r="2.5"/><circle cx="436.5" cy="338.5" r="2.5"/><circle cx="437.5" cy="338.5" r="2.5"/><circle cx="437.5" cy="337.5" r="2.5"/><circle cx="437.5" cy="336.5" r="2.5"/><circle cx="437.5" cy="335.5" r="2.5"/><circle cx="437.5" cy="334.5" r="2.5"/><circle cx="437.5" cy="333.5" r="2.5"/><circle cx="437.5" cy="332.5" r="2.5"/><circle cx="438.5" cy="331.5" r="2.5"/><circle cx="438.5" cy="330.5" r="2.5"/><circle cx="438.5" cy="329.5" r="2.5"/><circle cx="438.5" cy="328.5" r="2.5"/><circle cx="438.5" cy="327.5" r="2.5"/><circle cx="439.5" cy="327.5" r="2.5"/><circle cx="439.5" cy="326.5" r="2.5"/><circle cx="440.5" cy="326.5" r="2.5"/><circle cx="440.5" cy="325.5" r="2.5"/><circle cx="441.5" cy="325.5" r="2.5"/><circle cx="454.5" cy="322.5" r="2.5"/><circle cx="454.5" cy="321.5" r="2.5"/><circle cx="454.5" cy="320.5" r="2.5"/><circle cx="454.5" cy="319.5" r="2.5"/><circle cx="454.5" cy="318.5" r="2.5"/><circle cx="455.5" cy="317.5" r="2.5"/><circle cx="456.5" cy="316.5" r="2.5"/><circle cx="456.5" cy="315.5" r="2.5"/><circle cx="462.5" cy="312.5" r="2.5"/><circle cx="462.5" cy="311.5" r="2.5"/><circle cx="463.5" cy="311.5" r="2.5"/><circle cx="464.5" cy="311.5" r="2.5"/><circle cx="471.5" cy="309.5" r="2.5"/><circle cx="471.5" cy="308.5" r="2.5"/><circle cx="471.5" cy="307.5" r="2.5"/><circle cx="471.5" cy="306.5" r="2.5"/><circle cx="472.5" cy="305.5" r="2.5"/><circle cx="472.5" cy="304.5" r="2.5"/><circle cx="472.5" cy="303.5" r="2.5"/><circle cx="472.5" cy="302.5" r="2.5"/><circle cx="478.5" cy="295.5" r="2.5"/><circle cx="502.5" cy="296.5" r="2.5"/><circle cx="503.5" cy="295.5" r="2.5"/><circle cx="503.5" cy="294.5" r="2.5"/><circle cx="503.5" cy="293.5" r="2.5"/><circle cx="503.5" cy="292.5" r="2.5"/><circle cx="504.5" cy="291.5" r="2.5"/><circle cx="504.5" cy="290.5" r="2.5"/><circle cx="504.5" cy="289.5" r="2.5"/><circle cx="505.5" cy="289.5" r="2.5"/><circle cx="505.5" cy="288.5" r="2.5"/><circle cx="505.5" cy="287.5" r="2.5"/><circle cx="506.5" cy="278.5" r="2.5"/><circle cx="507.5" cy="277.5" r="2.5"/><circle cx="508.5" cy="277.5" r="2.5"/><circle cx="508.5" cy="276.5" r="2.5"/><circle cx="509.5" cy="276.5" r="2.5"/><circle cx="510.5" cy="276.5" r="2.5"/><circle cx="516.5" cy="274.5" r="2.5"/><circle cx="517.5" cy="273.5" r="2.5"/><circle cx="517.5" cy="272.5" r="2.5"/><circle cx="518.5" cy="272.5" r="2.5"/><circle cx="519.5" cy="271.5" r="2.5"/><circle cx="519.5" cy="270.5" r="2.5"/><circle cx="520.5" cy="269.5" r="2.5"/><circle cx="521.5" cy="269.5" r="2.5"/><circle cx="521.5" cy="268.5" r="2.5"/><circle cx="522.5" cy="268.5" r="2.5"/><circle cx="523.5" cy="267.5" r="2.5"/><circle cx="523.5" cy="266.5" r="2.5"/><circle cx="524.5" cy="266.5" r="2.5"/><circle cx="533.5" cy="262.5" r="2.5"/><circle cx="534.5" cy="262.5" r="2.5"/><circle cx="534.5" cy="261.5" r="2.5"/><circle cx="535.5" cy="260.5" r="2.5"/><circle cx="535.5" cy="259.5" r="2.5"/><circle cx="536.5" cy="258.5" r="2.5"/><circle cx="537.5" cy="257.5" r="2.5"/><circle cx="538.5" cy="257.5" r="2.5"/><circle cx="538.5" cy="256.5" r="2.5"/><circle cx="539.5" cy="256.5" r="2.5"/><circle cx="540.5" cy="255.5" r="2.5"/><circle cx="541.5" cy="254.5" r="2.5"/><circle cx="541.5" cy="253.5" r="2.5"/><circle cx="541.5" cy="252.5" r="2.5"/><circle cx="542.5" cy="252.5" r="2.5"/><circle cx="542.5" cy="251.5" r="2.5"/><circle cx="543.5" cy="251.5" r="2.5"/><circle cx="544.5" cy="251.5" r="2.5"/><circle cx="552.5" cy="250.5" r="2.5"/><circle cx="553.5" cy="249.5" r="2.5"/><circle cx="554.5" cy="249.5" r="2.5"/><circle cx="555.5" cy="248.5" r="2.5"/><circle cx="556.5" cy="248.5" r="2.5"/><circle cx="556.5" cy="247.5" r="2.5"/><circle cx="557.5" cy="247.5" r="2.5"/><circle cx="558.5" cy="246.5" r="2.5"/><circle cx="559.5" cy="245.5" r="2.5"/><circle cx="560.5" cy="244.5" r="2.5"/><circle cx="560.5" cy="243.5" r="2.5"/><circle cx="560.5" cy="242.5" r="2.5"/><circle cx="561.5" cy="241.5" r="2.5"/><circle cx="561.5" cy="240.5" r="2.5"/><circle cx="561.5" cy="239.5" r="2.5"/><circle cx="562.5" cy="239.5" r="2.5"/><circle cx="562.5" cy="238.5" r="2.5"/><circle cx="562.5" cy="237.5" r="2.5"/><circle cx="563.5" cy="236.5" r="2.5"/><circle cx="563.5" cy="235.5" r="2.5"/><circle cx="564.5" cy="235.5" r="2.5"/><circle cx="564.5" cy="234.5" r="2.5"/><circle cx="565.5" cy="233.5" r="2.5"/><circle cx="565.5" cy="232.5" r="2.5"/><circle cx="566.5" cy="232.5" r="2.5"/><circle cx="566.5" cy="231.5" r="2.5"/><circle cx="566.5" cy="230.5" r="2.5"/><circle cx="567.5" cy="229.5" r="2.5"/><circle cx="572.5" cy="228.5" r="2.5"/><circle cx="572.5" cy="227.5" r="2.5"/><circle cx="572.5" cy="226.5" r="2.5"/><circle cx="573.5" cy="225.5" r="2.5"/><circle cx="573.5" cy="224.5" r="2.5"/><circle cx="573.5" cy="223.5" r="2.5"/><circle cx="574.5" cy="222.5" r="2.5"/><circle cx="579.5" cy="219.5" r="2.5"/><circle cx="579.5" cy="218.5" r="2.5"/><circle cx="580.5" cy="217.5" r="2.5"/><circle cx="580.5" cy="216.5" r="2.5"/><circle cx="580.5" cy="215.5" r="2.5"/><circle cx="580.5" cy="214.5" r="2.5"/><circle cx="581.5" cy="213.5" r="2.5"/><circle cx="581.5" cy="212.5" r="2.5"/><circle cx="581.5" cy="211.5" r="2.5"/><circle cx="581.5" cy="210.5" r="2.5"/><circle cx="582.5" cy="209.5" r="2.5"/><circle cx="583.5" cy="208.5" r="2.5"/><circle cx="583.5" cy="207.5" r="2.5"/><circle cx="584.5" cy="206.5" r="2.5"/><circle cx="585.5" cy="205.5" r="2.5"/><circle cx="585.5" cy="204.5" r="2.5"/><circle cx="585.5" cy="203.5" r="2.5"/><circle cx="586.5" cy="202.5" r="2.5"/><circle cx="586.5" cy="201.5" r="2.5"/><circle cx="587.5" cy="200.5" r="2.5"/><circle cx="587.5" cy="199.5" r="2.5"/><circle cx="587.5" cy="198.5" r="2.5"/><circle cx="588.5" cy="197.5" r="2.5"/><circle cx="588.5" cy="196.5" r="2.5"/><circle cx="588.5" cy="195.5" r="2.5"/><circle cx="588.5" cy="194.5" r="2.5"/><circle cx="589.5" cy="193.5" r="2.5"/><circle cx="589.5" cy="192.5" r="2.5"/><circle cx="590.5" cy="191.5" r="2.5"/><circle cx="590.5" cy="190.5" r="2.5"/><circle cx="590.5" cy="189.5" r="2.5"/></g>
<g font-size="13px" fill="#000"><text x="96.1" y="183.3" textLength="41.2" lengthAdjust="spacingAndGlyphs">110000</text><text x="96.1" y="216.3" textLength="41.2" lengthAdjust="spacingAndGlyphs">100000</text><text x="103.0" y="249.3" textLength="34.4" lengthAdjust="spacingAndGlyphs">90000</text><text x="103.0" y="282.3" textLength="34.4" lengthAdjust="spacingAndGlyphs">80000</text><text x="103.0" y="315.3" textLength="34.4" lengthAdjust="spacingAndGlyphs">70000</text><text x="103.0" y="348.3" textLength="34.4" lengthAdjust="spacingAndGlyphs">60000</text><text x="103.0" y="382.3" textLength="34.4" lengthAdjust="spacingAndGlyphs">50000</text><text x="103.0" y="415.3" textLength="34.4" lengthAdjust="spacingAndGlyphs">40000</text><text x="103.0" y="448.3" textLength="34.4" lengthAdjust="spacingAndGlyphs">30000</text><text x="103.0" y="481.3" textLength="34.4" lengthAdjust="spacingAndGlyphs">20000</text><text x="103.0" y="514.3" textLength="34.4" lengthAdjust="spacingAndGlyphs">10000</text><text x="130.4" y="547.3" textLength="6.9" lengthAdjust="spacingAndGlyphs">0</text><text x="139.2" y="597.4" textLength="6.9" lengthAdjust="spacingAndGlyphs">0</text><text x="173.1" y="597.4" textLength="20.6" lengthAdjust="spacingAndGlyphs">100</text><text x="213.9" y="597.4" textLength="20.6" lengthAdjust="spacingAndGlyphs">200</text><text x="254.7" y="597.4" textLength="20.6" lengthAdjust="spacingAndGlyphs">300</text><text x="295.5" y="597.4" textLength="20.6" lengthAdjust="spacingAndGlyphs">400</text><text x="336.3" y="597.4" textLength="20.6" lengthAdjust="spacingAndGlyphs">500</text><text x="377.1" y="597.4" textLength="20.6" lengthAdjust="spacingAndGlyphs">600</text><text x="417.9" y="597.4" textLength="20.6" lengthAdjust="spacingAndGlyphs">700</text><text x="458.7" y="597.4" textLength="20.6" lengthAdjust="spacingAndGlyphs">800</text><text x="499.5" y="597.4" textLength="20.6" lengthAdjust="spacingAndGlyphs">900</text><text x="536.8" y="597.4" textLength="27.5" lengthAdjust="spacingAndGlyphs">1000</text><text x="577.6" y="597.4" textLength="27.5" lengthAdjust="spacingAndGlyphs">1100</text></g>
<g font-size="13px" font-weight="bold"><text x="134.3" y="137.4" textLength="110.9" lengthAdjust="spacingAndGlyphs">Equity Curve Line</text><text x="250.6" y="137.4" textLength="4.5" lengthAdjust="spacingAndGlyphs">-</text><text x="258.9" y="137.4" textLength="160.8" lengthAdjust="spacingAndGlyphs">@ES 5 min.(1/3/2016 17:05</text><text x="425.1" y="137.4" textLength="4.5" lengthAdjust="spacingAndGlyphs">-</text><text x="434.0" y="137.4" textLength="96.1" lengthAdjust="spacingAndGlyphs">1/25/2018 18:10)</text></g>
<text x="366.5" y="628" text-anchor="middle" font-size="19.7px">Trade Number</text>
<text transform="translate(80.8,375.5) rotate(-90)" text-anchor="middle" font-size="19.7px">Equity($)</text>
<g shape-rendering="crispEdges"><rect x="650.5" y="362.5" width="106" height="59" fill="#fff" stroke="#000" stroke-width="1"/>
<rect x="652" y="393" width="48" height="1" fill="#000"/></g>
<circle cx="677.5" cy="410.5" r="2.5" fill="#00ff00" shape-rendering="crispEdges"/>
<g font-size="13px" fill="#000"><text x="680.3" y="377.3" textLength="41.6" lengthAdjust="spacingAndGlyphs">Legend</text><text x="716" y="398.8" textLength="38.2" lengthAdjust="spacingAndGlyphs">Trades</text><text x="716" y="414.8" textLength="34.6" lengthAdjust="spacingAndGlyphs">Peaks</text></g>
</svg>
<!-- tabs -->
<div class="tab" style="left:15px;width:144px">Performance Summary</div>
<div class="tab" style="left:159px;width:96px">Trade Analysis</div>
<div class="tab" style="left:255px;width:75px">Trades List</div>
<div class="tab" style="left:330px;width:114px">Periodical Returns</div>
<div class="abs" style="left:443px;top:680px;width:133px;height:23px;background:#fff;border-left:1px solid #898c95;border-right:1px solid #898c95;box-sizing:border-box;font-size:12.7px;line-height:28px;text-align:center;white-space:nowrap">Performance Graphs</div>
<div class="tab" style="left:576px;width:88px">Trade Graphs</div>
<div class="tab" style="left:664px;width:56px">Settings</div>
</body></html>
